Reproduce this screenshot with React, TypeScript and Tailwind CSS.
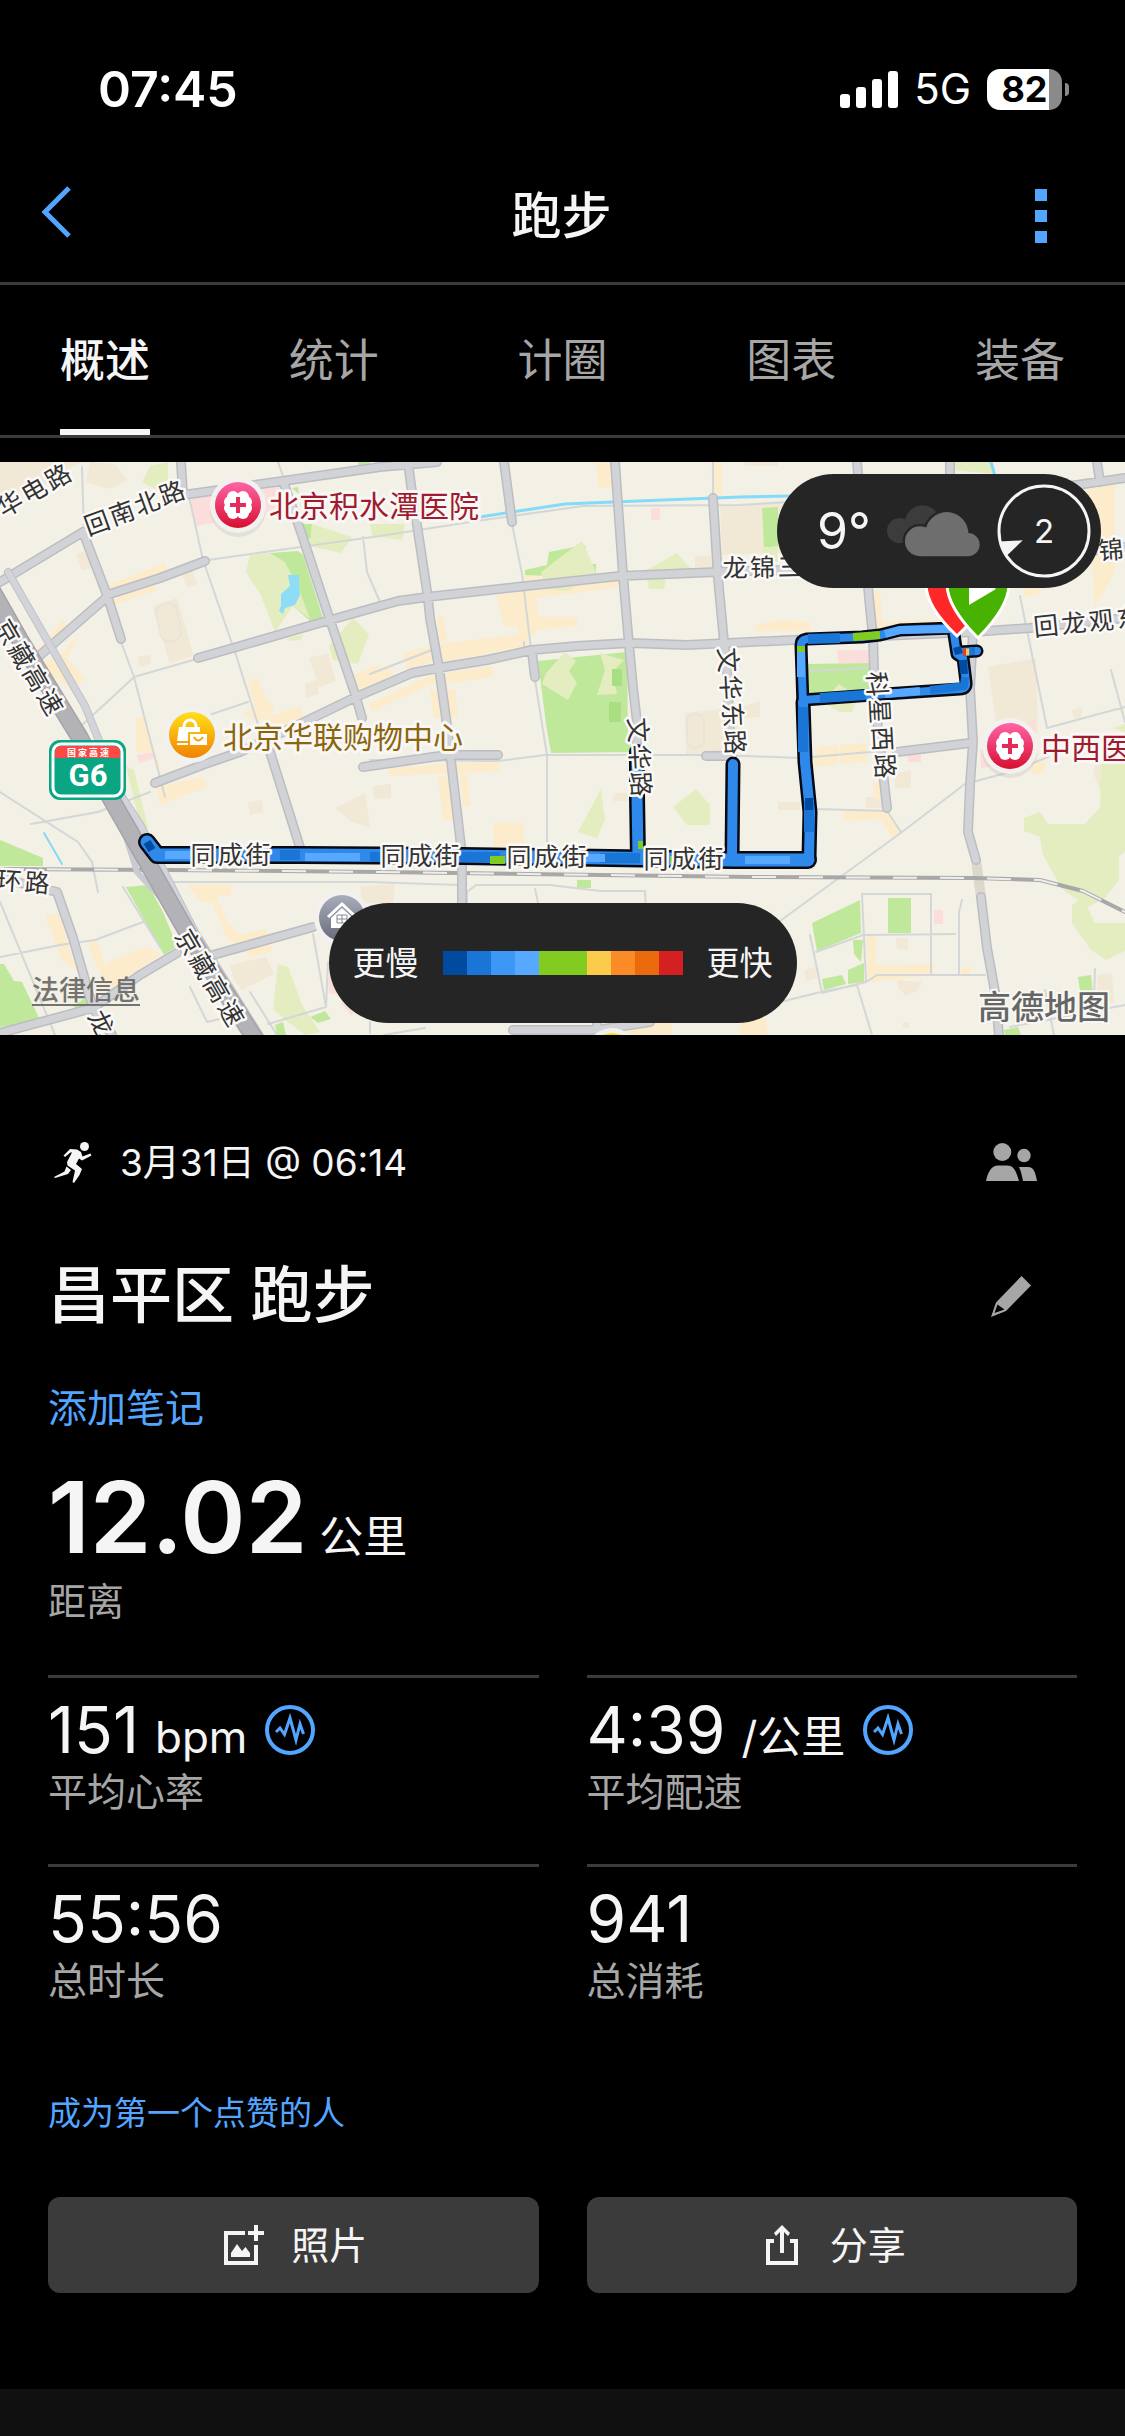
import React from 'react';

const tabs = ['概述', '统计', '计圈', '图表', '装备'];

const paceColors = [
  'bg-[#004a9f]',
  'bg-[#1976d6]',
  'bg-[#3d97f7]',
  'bg-[#56a9ff]',
  'bg-[#82cb20]',
  'bg-[#82cb20]',
  'bg-[#fbcb4b]',
  'bg-[#fa8b27]',
  'bg-[#eb6a0e]',
  'bg-[#d42020]',
];

const stats = [
  { value: '151', unit: 'bpm', label: '平均心率', pulse: true },
  { value: '4:39', unit: '/公里', label: '平均配速', pulse: true },
  { value: '55:56', unit: '', label: '总时长', pulse: false },
  { value: '941', unit: '', label: '总消耗', pulse: false },
];

// Map areas, grouped by fill
const areas = [
  {
    fill: '#f2e8d6',
    d: 'M0 0H83L70 6L40 25L0 33Z M86 20L90 0L115 2L127 18L110 27Z M153 145L177 136L188 173L193 194L170 201L163 180Z M309 196L328 191L336 219L319 225Z M305 222L318 218L318 232L306 236Z M182 112L192 108L197 122L187 126Z M76 92L88 88L92 106L82 108Z M137 195L150 193L151 202L140 205Z M720 44L806 40V90L722 93Z M685 251L740 245V291L686 292Z M695 94L712 94L712 105L695 105Z M248 340L262 338L263 350L250 353Z M335 346L365 331L370 365L352 360Z M373 324L391 322L391 336L374 337Z M613 331H628V339H613Z M988 205L1036 196L1038 270L998 274Z M1072 248L1082 245L1081 258L1074 256Z M895 312L911 308L911 326L895 326Z M778 340H800V348H778Z M866 335H885V346H866Z M360 424L395 422L393 441H362Z M230 503L266 495L274 512L242 528L234 518Z M897 518L922 520L918 528L906 534L898 526Z M896 476L908 476V489L897 487Z M804 508L815 505L817 516L806 519Z M1097 513L1112 511L1114 541L1098 540Z M903 560H909V566H903Z M1095 303L1101 302V330L1093 310Z M745 0H778V4H745Z M742 245L760 239V255L742 256Z',
  },
  {
    fill: '#fceccb',
    d: 'M108 123L165 101L167 108L108 130Z M113 138L155 122L157 128L114 143Z M63 158L68 165L38 195L34 192Z M43 200L60 193L77 174L76 181L66 196L85 216L73 229L45 207Z M248 220L257 215L268 240L273 241L273 250L258 260L243 252L255 246Z M353 213L380 202L380 222L355 230Z M136 255L145 255L150 275L162 310L152 293L136 290Z M262 257L300 244L303 256L268 268Z M596 0H612V26H598Z M711 0H722V32H713Z M496 133L620 119V125L537 136V149L540 155H577V164L537 168L526 180L529 184L440 200L441 182L518 172L518 164L504 165Z M437 154L443 154L447 178L440 180Z M402 192L430 184L433 199L407 207Z M370 211L388 205L394 214L370 225Z M370 241L434 212L436 220L370 250Z M446 211L493 204V215L446 222Z M430 228H440L442 256H434Z M446 228L455 227L458 255H449Z M524 113L539 111L540 117L525 119Z M388 306L500 299V309L389 314Z M438 314L447 314L454 358L443 358Z M460 312L467 312L470 344L463 344Z M493 361H524V385H494Z M157 325L203 315L207 325L160 343Z M188 423L231 422V434H216L227 459L240 473L266 467L268 478L240 483L228 478L212 440H200Z M45 453L60 451L70 490L78 509L62 498Z M87 479L97 476L104 502L145 485L162 492L108 528L96 503Z M245 487L270 482L272 490L248 496Z M873 130L880 129L882 160L990 155L993 163L876 168Z M755 163L780 158L810 160V169H755Z M818 285L838 284V302L812 305Z M840 283L867 281L867 300L840 302Z M873 320L882 320L880 337H874Z M843 348L890 349L901 371L894 378L880 357L843 359Z M1030 302L1045 297L1044 311L1032 313Z M866 472H876V503L933 502V513L868 520Z M740 560L765 553L768 573H740Z M1085 23L1115 22V110L1095 145L1091 80Z M1023 125L1042 127L1040 132L1024 135Z M604 560L672 553V573H604Z M961 506L970 504V512H961Z',
  },
  {
    fill: '#bfe89a',
    d: 'M270 91L298 89L303 93L323 156L310 159L293 144L285 120Z M260 130L273 145L275 168Z M295 62L312 62L311 77L307 76Z M292 26L298 25L299 32Z M358 0H370V3H358Z M549 90L585 83L588 102L596 102V116L525 113L525 108L547 103Z M538 199L627 190L628 272L632 290L551 291L546 262Z M762 46L778 45V85H764Z M808 202L871 201L872 232L809 234Z M577 418H591V426H577Z M0 378L43 396V404H0Z M126 425L148 423L163 450L177 484L164 493Z M0 502L4 502L14 519L22 520L40 558L0 565Z M73 544L85 536L92 545L77 548Z M310 555L325 549L331 557L318 561Z M275 563L283 560L286 573H277Z M812 461L860 438L861 471L817 489Z M888 436H911V471H888Z M853 478L863 478L861 500L854 492Z M848 508L864 501V520L848 522Z M822 517L842 513L846 522L824 528Z M1078 515L1091 513L1093 532L1080 529Z M1004 568L1018 565L1021 573H1005Z',
  },
  {
    fill: '#e4edbf',
    d: 'M142 20L150 4L168 0V22L155 27Z M250 93L270 91L285 100L300 130L310 157L293 144L275 170L262 135L246 110Z M286 177L304 172L300 178L290 179Z M353 156L369 172L358 202L333 198L329 184Z M312 62L352 75L341 91L310 84Z M370 62L405 62L402 78L372 74Z M541 110L582 79L596 110L590 116L568 129L545 127Z M645 109L677 91L690 106L688 108L667 110L664 127L649 127Z M565 190L576 199L569 209L577 221L568 238L542 222L546 211Z M600 191L624 198L612 210L617 232L597 233L605 208Z M601 327L605 358L597 376L578 370Z M696 327L710 343L710 363H687L673 345Z M126 304L134 308L148 365L143 375Z M278 502L288 505L302 543L320 570L305 573L283 556L273 547Z M822 240L839 222L855 233L850 240H856L852 250H840Z M762 86L777 84L778 100H766Z M955 0H992L994 12L955 8Z M1101 302H1125V390L1119 394V418L1105 436L1088 445L1062 427L1043 393L1040 375L1024 369V356L1040 350L1048 362H1085L1100 345Z M1072 443L1083 436L1095 461H1125V489L1106 498L1091 488L1072 461Z M1113 266L1125 262V270Z',
  },
  {
    fill: '#fbdedb',
    d: 'M190 36L281 24V48L196 64Z M651 46H660V58H651Z M837 188L871 188V201L838 201Z M137 293L155 290L155 296L139 301Z M907 292L921 291V300H908Z M1026 260L1035 258V270H1027Z M980 288L990 285V305L981 306Z M934 448H943V462H934Z M328 515L340 510V532H329Z M340 540L356 545L352 554Z',
  },
  {
    fill: '#8ddcf8',
    d: 'M288 113H299V123L300 133L295 143L285 146L283 152L279 149L281 144V132L290 124Z',
  },
  {
    fill: '#a9df82',
    d: 'M612 207H622V224H612Z M609 240H621V260H609Z',
  },
];

const lanes =
  'M82 5L84 70 M188 30L203 98L235 190L262 275 M208 98L380 74L470 60L583 44L740 43L900 33 M121 180L134 215L165 335 M134 215L200 196 M134 215L105 242L82 263 M248 240L206 254 M0 330L78 380L92 400L98 430 M31 362L98 350L150 330 M278 0L285 20 M363 75L367 110L380 140 M512 62L522 112L531 187 M535 218L547 293V400 M370 212L432 188 M370 298L498 299L545 293H720L800 296L870 290L970 278 M166 420H370L460 423 M0 495L60 483L95 478L143 460 M123 425L160 485 M0 440L55 573 M190 525L207 560L228 555 M250 530L277 573 M313 472L326 545L268 562 M326 545L328 500 M467 443V430L476 423L550 423L600 429H645L646 450 M535 427L539 445 M713 0V36 M620 178L524 185V180 M1020 134L1047 266L1125 245 M1111 208L1125 260 M780 459L902 370L965 322L1010 310L1048 295 M815 347L887 349 M887 349L901 370 M862 432H931V513 M862 432L866 520L822 531L810 473 M816 490L863 473L955 472 M866 520L877 513H985 M780 540L825 529L857 523L872 573 M959 513V450L962 438 M1125 543L1010 565 M1045 528L1054 573 M1095 507L1094 535 M370 571V560 M384 573L425 566 M808 209L870 206';

const roads =
  'M0 120L83 70 M181 0L183 33 M183 33L283 19L380 5L437 0 M83 70L107 133L121 177 M107 133L160 116L205 99 M38 195L107 135 M198 196L233 186L330 158L398 139L427 135L517 125L620 114L717 110L850 106L1010 98L1125 85 M283 19L302 73L330 158L356 235L362 256 M155 321L205 302L240 290L300 262L356 235L412 211L438 206L487 198L532 188L577 184L630 181L687 183L750 180L857 175L973 170L1030 166L1125 156 M270 290L293 363L303 395 M363 305L447 293L498 293 M408 0L411 23L428 136L430 156L439 206L446 256L457 350L462 393V440 M504 0L512 60 M532 190L535 215 M615 0L623 113L629 183L633 226L637 260V390 M713 36L718 116L724 180L727 206L731 300 M857 0L862 60L870 146L873 175L875 240L887 346 M706 294H732 M950 0V20 M1097 0L1100 20 M1070 24L1125 16 M897 290L970 281 M973 170L970 226L973 280L970 323L968 370L976 398 M981 435L987 486L995 530L999 573 M57 430L73 476L93 546L112 573 M0 571L93 546L140 513L177 491 M213 493L313 465 M0 416L57 430 M513 568H597L650 560 M597 568V556';

const highway = 'M-10 125L20 178L80 276L110 335L187 470L257 580';
const railway = 'M0 407L167 408L380 410L750 415L973 416L1040 418L1083 429L1125 450';

const routeSegments = [
  { width: 13, d: 'M803 243L801 183Q801 178 807 177L862 175L880 173L900 168L953 166L957 192L963 196L966 220Q967 227 960 227L900 231L803 238' },
  { width: 13, d: 'M960 190L977 189' },
  { width: 15, d: 'M803 240L805 300L810 350L809 396' },
  { width: 18, d: 'M147 380L157 393H300L462 394L610 396L733 398L808 398' },
  { width: 16, d: 'M638 396L637 333V290' },
  { width: 15, d: 'M732 396L733 302' },
];

const routeTints = [
  { color: '#1976d6', width: 10, d: 'M280 393H300 M370 395H380 M460 395H500 M600 396H640 M820 236L865 233 M808 177L840 176 M803 245V290 M809 340V370' },
  { color: '#56a9ff', width: 8, d: 'M165 393H190 M305 395H360 M580 396H605 M745 398H790 M885 172L900 168L950 167 M801 190V215 M885 232L920 229' },
  { color: '#004a9f', width: 8, d: 'M147 380L152 388 M957 185L959 192 M963 198L964 212 M809 336V348' },
  { color: '#1976d6', width: 8, d: 'M965 215L964 224L930 228 M975 189L970 189' },
  { color: '#82cb20', width: 8, d: 'M853 175L880 173 M801 184V190 M490 398H505 M670 398H676 M638 383H643' },
  { color: '#fbcb4b', width: 7, d: 'M966 190L969 190' },
  { color: '#eb3a1e', width: 7, d: 'M963 190L966 190' },
];

// Street names run along a line between the centres of their first and last glyph
const streetLabels = [
  { text: '华电路', from: [10, 42], to: [58, 15], angle: -30 },
  { text: '回南北路', from: [97, 61], to: [172, 31], angle: -20 },
  { text: '京藏高速', from: [7, 170], to: [50, 240], angle: 60 },
  { text: '京藏高速', from: [188, 480], to: [231, 551], angle: 60 },
  { text: '环路', from: [9, 419], to: [37, 421], angle: 4 },
  { text: '龙', from: [101, 561], to: [101, 561], angle: 62 },
  { text: '同成街', from: [203, 393], to: [258, 393], angle: 0 },
  { text: '同成街', from: [393, 394], to: [447, 394], angle: 0 },
  { text: '同成街', from: [519, 395], to: [574, 395], angle: 0 },
  { text: '同成街', from: [656, 397], to: [711, 397], angle: 0 },
  { text: '文华路', from: [638, 268], to: [641, 322], angle: 87 },
  { text: '文华东路', from: [728, 198], to: [735, 280], angle: 87 },
  { text: '科星西路', from: [877, 222], to: [885, 304], angle: 87 },
  { text: '龙锦三', from: [735, 106], to: [790, 105], angle: -1 },
  { text: '锦', from: [1111, 88], to: [1111, 88], angle: -5 },
  { text: '回龙观东', from: [1046, 164], to: [1129, 156], angle: -6 },
];

const StreetLabel: React.FC<{ label: (typeof streetLabels)[number] }> = ({ label }) => {
  const chars = label.text.split('');
  const steps = Math.max(chars.length - 1, 1);
  return (
    <>
      {chars.map((char, i) => {
        const x = label.from[0] + ((label.to[0] - label.from[0]) * i) / steps;
        const y = label.from[1] + ((label.to[1] - label.from[1]) * i) / steps;
        return (
          <text key={i} x={x} y={y + 9} transform={`rotate(${label.angle} ${x} ${y})`} textAnchor="middle">
            {char}
          </text>
        );
      })}
    </>
  );
};

const HospitalPin = ({ x, y }: { x: number; y: number }) => (
  <g transform={`translate(${x} ${y})`}>
    <circle r="28" fill="#9a9a9a" opacity="0.18" cy="4" />
    <circle r="28" fill="#f3f1ef" />
    <circle r="23" fill="url(#hospital)" />
    <g fill="#fff">
      <circle cx="-5" cy="-8" r="6" />
      <circle cx="5" cy="-8" r="6" />
      <circle cx="-5" cy="8" r="6" />
      <circle cx="5" cy="8" r="6" />
      <circle cx="-8" cy="-3" r="6" />
      <circle cx="8" cy="-3" r="6" />
      <circle cx="-8" cy="3" r="6" />
      <circle cx="8" cy="3" r="6" />
    </g>
    <path d="M-2 -8H2V-2H8V2H2V8H-2V2H-8V-2H-2Z" fill="#e52b5c" />
  </g>
);

const CityMap = () => (
  <svg
    className="block h-[573px] w-full"
    viewBox="0 0 1125 573"
    preserveAspectRatio="xMidYMid slice"
    role="img"
    aria-label="跑步路线"
  >
    <defs>
      <linearGradient id="hospital" x1="0" y1="0" x2="0" y2="1">
        <stop offset="0" stopColor="#ff64a6" />
        <stop offset="1" stopColor="#d70f31" />
      </linearGradient>
      <linearGradient id="shop" x1="0" y1="0" x2="0" y2="1">
        <stop offset="0" stopColor="#ffdf1b" />
        <stop offset="1" stopColor="#ef8300" />
      </linearGradient>
      <linearGradient id="home" x1="0" y1="0" x2="0" y2="1">
        <stop offset="0" stopColor="#a9adbb" />
        <stop offset="1" stopColor="#676b7b" />
      </linearGradient>
    </defs>

    <rect width="1125" height="573" fill="#f3f0e5" />
    {areas.map((area) => (
      <path key={area.fill} d={area.d} fill={area.fill} />
    ))}
    <g fill="none" stroke="#e3e4dc" strokeOpacity="0.7" strokeWidth="2">
      <rect x="158" y="141" width="21" height="39" rx="10" transform="rotate(-12 168 160)" />
      <rect x="687" y="252" width="17" height="34" rx="8" />
    </g>

    <g fill="none" strokeLinecap="round" strokeLinejoin="round">
      <path d={lanes} stroke="#d3d7d7" strokeWidth="2" />
      <path d="M480 55L512 50L565 42L613 40L740 35L900 32 M991 0L995 14" stroke="#84daf9" strokeWidth="3" />
      <path d="M44 371L62 402" stroke="#84daf9" strokeWidth="2" />
      <path d="M976 398L981 435" stroke="#dcd8cc" strokeWidth="10" strokeLinecap="butt" />
      <path d={railway} stroke="#a8a8a8" strokeWidth="4" />
      <path d={railway} stroke="#eeeeee" strokeWidth="2" strokeDasharray="24 23" strokeLinecap="butt" />
      <path d={roads} stroke="#bcbdc2" strokeWidth="10" />
      <path d={roads} stroke="#d2d3d7" strokeWidth="7" />
      <path d="M8 110L85 244L122 335L140 362L195 470L270 590" stroke="#c0c2c8" strokeWidth="8" />
      <path d="M8 110L85 244L122 335L140 362L195 470L270 590" stroke="#d2d4d9" strokeWidth="6" />
      <path d="M100 320L126 375L137 410L160 435" stroke="#c9cbd0" strokeWidth="6" />
      <path d={highway} stroke="#a3a3a9" strokeWidth="18" />
      <path d={highway} stroke="#b2b2b7" strokeWidth="15" />
    </g>

    <g fill="none" strokeLinecap="round" strokeLinejoin="round">
      {routeSegments.map((segment) => (
        <path key={segment.d} d={segment.d} stroke="#050a14" strokeWidth={segment.width} />
      ))}
      {routeSegments.map((segment) => (
        <path key={segment.d} d={segment.d} stroke="#2f89ea" strokeWidth={segment.width - 5} />
      ))}
      {routeTints.map((tint) => (
        <path key={tint.d} d={tint.d} stroke={tint.color} strokeWidth={tint.width} strokeLinecap="butt" />
      ))}
    </g>

    <g
      className="font-['Noto_Sans_CJK_SC',sans-serif] text-[25px]"
      fill="#333"
      stroke="#fbfaf8"
      strokeWidth="5"
      strokeLinejoin="round"
      paintOrder="stroke"
    >
      {streetLabels.map((label, i) => (
        <StreetLabel key={i} label={label} />
      ))}
    </g>

    {/* start and finish markers */}
    <g stroke="#fff" strokeWidth="3">
      <path d="M957 174C940 158 926 140 926 122A31 31 0 0 1 988 122C988 140 974 158 957 174Z" fill="#ff2828" />
      <path d="M978 176C960 158 947 140 947 122A31 31 0 0 1 1009 122C1009 140 996 158 978 176Z" fill="#47b300" />
    </g>
    <path d="M969 110L996 127L969 143Z" fill="#fff" />

    <g
      className="font-['Noto_Sans_CJK_SC',sans-serif] text-[30px]"
      stroke="#f9f7f5"
      strokeWidth="6"
      strokeLinejoin="round"
      paintOrder="stroke"
    >
      <text x="269" y="55" fill="#a01b2e">北京积水潭医院</text>
      <text x="223" y="286" fill="#8a650d">北京华联购物中心</text>
      <text x="1041" y="297" fill="#a01b2e">中西医院</text>
    </g>
    <HospitalPin x={238} y={43} />
    <HospitalPin x={1010} y={284} />
    <circle cx="192" cy="273" r="28" fill="#f3f1ef" />
    <circle cx="192" cy="273" r="23" fill="url(#shop)" />
    <path d="M184 267V264A6 6 0 0 1 196 264V267" fill="none" stroke="#fff" strokeWidth="3" />
    <path d="M179 265H200V270H188V279H177Z M177 281H188V283H177Z M190 272H207V283H190Z" fill="#fff" />
    <path d="M194 275Q198 282 203 275" fill="none" stroke="#f5a70a" strokeWidth="2" />
    <circle cx="342" cy="456" r="28" fill="#f3f1ef" />
    <circle cx="342" cy="456" r="23" fill="url(#home)" />
    <path d="M328 455L342 442L356 455" fill="none" stroke="#fff" strokeWidth="3" />
    <path d="M331 456L342 446L353 456V466H331Z" fill="#fff" />
    <path d="M337 453H347V461H337Z M342 453V461M337 457H347" fill="none" stroke="#858999" strokeWidth="1" />
    <circle cx="612" cy="592" r="26" fill="#f3f1ef" />
    <circle cx="612" cy="592" r="21" fill="url(#shop)" />

    {/* G6 expressway shield */}
    <rect x="49" y="278" width="77" height="60" rx="11" fill="#0aa583" />
    <rect x="53" y="282" width="69" height="52" rx="8" fill="none" stroke="#fff" strokeWidth="3" />
    <path d="M55 296V290Q55 284 61 284H114Q120 284 120 290V296Z" fill="#fb4a45" />
    <text x="88" y="294" textAnchor="middle" fill="#fff" className="font-['Noto_Sans_CJK_SC',sans-serif] text-[9px] font-bold">
      国 家 高 速
    </text>
    <text x="88" y="324" textAnchor="middle" fill="#fff" className="font-['Roboto',sans-serif] text-[31px] font-bold">
      G6
    </text>

    <text
      x="978"
      y="557"
      fill="#666"
      stroke="#f8f7f2"
      strokeWidth="4"
      paintOrder="stroke"
      className="font-['Noto_Sans_CJK_SC',sans-serif] text-[33px] font-medium"
    >
      高德地图
    </text>
  </svg>
);

const CloudIcon = () => (
  <svg className="h-[52px] w-[93px]" viewBox="440 150 280 156" aria-hidden="true">
    <g fill="#3c3c3c">
      <circle cx="478" cy="227" r="38" />
      <circle cx="547" cy="205" r="54" />
    </g>
    <g fill="#252525" stroke="#252525" strokeWidth="14">
      <circle cx="539" cy="259" r="45" />
      <circle cx="620" cy="236" r="65" />
    </g>
    <g fill="#6e6e6e">
      <circle cx="539" cy="259" r="45" />
      <circle cx="620" cy="236" r="65" />
      <circle cx="684" cy="269" r="35" />
      <path d="M539 250H684V304H539Z" />
    </g>
  </svg>
);

const PulseIcon = () => (
  <svg className="h-[50px] w-[50px]" viewBox="0 0 50 50" fill="none" stroke="#52a6ff" aria-hidden="true">
    <circle cx="25" cy="25" r="23" strokeWidth="4" />
    <path d="M11 27L15 23L19.500 29.500L25 13L31 35L35 19L38.500 29" strokeWidth="3" />
  </svg>
);

const RunnerIcon = () => (
  <svg className="h-[41px] w-[38px]" viewBox="0 0 38 41" fill="#f5f5f5" aria-hidden="true">
    <circle cx="30.500" cy="4.500" r="4.500" />
    <path d="M16 7L23 7.500L27 10L28.500 14.500L36.500 11.500L37.500 13.500L28 18.500L25 16.500L22 22L28 27L25.500 33L20 41L18.500 40L20.500 31L21 28.500L13.500 23.500L13 20L18 10.500H16.500L11 15L9.500 13.500Z" />
    <path d="M12.500 24.500L17 28L14 32L1 36L0 35L10.500 29.500Z" />
  </svg>
);

const PeopleIcon = () => (
  <svg className="h-[38px] w-[51px]" viewBox="0 0 51 38" fill="#a6a6a6" aria-hidden="true">
    <circle cx="16.300" cy="9" r="9" />
    <path d="M0 38C2 28 6 22.500 12 22.500H21C28 22.500 30 28 33 38Z" />
    <circle cx="38" cy="12.500" r="6.700" />
    <path d="M33 24H42C48 24 49.500 30 51 38H37C36 33 35 28 33 24Z" />
  </svg>
);

const PencilIcon = () => (
  <svg className="h-[41px] w-[40px]" viewBox="0 0 40 41" fill="#a6a6a6" fillRule="evenodd" aria-hidden="true">
    <path d="M30.600 0L40 9.500L15 35L0 41L5 26.500Z M6.500 28.500L3.500 37L13.500 33.500Z" />
  </svg>
);

const PhotoIcon = () => (
  <svg className="h-10 w-12" viewBox="-5 0 48 40" fill="#f5f5f5" aria-hidden="true">
    <path d="M0 6H21V10H4V36H30V20H34V40H0Z M30 0H34V6H40V10H34V16H30V10H24V6H30Z M7 32V28L13 19L18 26L21.500 22L26 28V32Z" />
  </svg>
);

const ShareIcon = () => (
  <svg className="h-10 w-12" viewBox="-8 0 48 40" fill="#f5f5f5" aria-hidden="true">
    <path d="M0 14H8V18H4V36H28V18H24V14H32V40H0Z" />
    <path d="M16 0L24 8L22 11L18 7V28H14V7L10 11L8 8Z" />
  </svg>
);

const StatusBar = () => (
  <div className="flex h-[150px] items-center justify-between pt-7 pr-14 pl-[98px] text-white">
    <span className="text-[50px] leading-none font-semibold">07:45</span>
    <div className="flex items-center gap-4">
      <div className="flex items-end gap-[6px]">
        <span className="h-[14px] w-[10px] rounded-[3px] bg-white" />
        <span className="h-[21px] w-[10px] rounded-[3px] bg-white" />
        <span className="h-[29px] w-[10px] rounded-[3px] bg-white" />
        <span className="h-[37px] w-[10px] rounded-[3px] bg-white" />
      </div>
      <span className="text-[42px] leading-none">5G</span>
      <div className="flex items-center gap-[3px]">
        <div className="flex h-[41px] w-[75px] items-center justify-center rounded-[13px] bg-linear-to-r from-white from-83% to-[#8a8a8a] to-83% text-[36px] leading-none font-bold text-black">
          82
        </div>
        <span className="h-[13px] w-[4px] rounded-r-full bg-[#8a8a8a]" />
      </div>
    </div>
  </div>
);

export default function App() {
  return (
    <div className="min-h-screen bg-black font-['Inter','Noto_Sans_CJK_SC',sans-serif] text-[#f5f5f5]">
      <StatusBar />

      <header className="flex h-[135px] items-center justify-between border-b-[3px] border-[#3b3b3b] pr-[78px] pl-10">
        <button aria-label="返回" className="pb-2">
          <svg className="h-[52px] w-8" viewBox="0 0 32 52" fill="none" stroke="#52a6ff" strokeWidth="5" aria-hidden="true">
            <path d="M29 2L5 26L29 50" />
          </svg>
        </button>
        <h1 className="pl-9 text-[50px] leading-none font-medium">跑步</h1>
        <button aria-label="更多" className="flex w-8 flex-col items-end gap-[9px]">
          <span className="size-3 bg-[#52a6ff]" />
          <span className="size-3 bg-[#52a6ff]" />
          <span className="size-3 bg-[#52a6ff]" />
        </button>
      </header>

      <nav role="tablist" className="flex justify-between border-b-[3px] border-[#3b3b3b] px-[60px]">
        {tabs.map((tab, i) => (
          <button
            key={tab}
            role="tab"
            aria-selected={i === 0}
            className="h-[150px] border-y-[6px] border-transparent text-[45px] leading-none text-[#a6a6a6] aria-selected:border-b-[#f5f5f5] aria-selected:font-medium aria-selected:text-[#f5f5f5]"
          >
            {tab}
          </button>
        ))}
      </nav>

      <section className="relative mt-6 overflow-hidden">
        <CityMap />
        <div className="absolute top-3 right-6 flex h-[114px] w-[324px] items-center justify-between rounded-full bg-[#252525] pr-[10px] pl-10">
          <span className="text-[50px] leading-none">9°</span>
          <CloudIcon />
          <div className="relative flex size-[94px] items-center justify-center text-[33px] leading-none">
            <svg className="absolute inset-0" viewBox="770 86 284 284" aria-hidden="true">
              <circle cx="912" cy="228" r="136" fill="none" stroke="#f5f5f5" strokeWidth="9" />
              <path d="M778 260L848 256L800 302Z" fill="#f5f5f5" />
            </svg>
            2
          </div>
        </div>
        <div className="absolute bottom-3 left-1/2 flex h-[120px] -translate-x-1/2 items-center gap-6 rounded-full bg-[#252525] px-6 text-[33px] leading-none whitespace-nowrap">
          <span>更慢</span>
          <div className="flex">
            {paceColors.map((color, i) => (
              <span key={i} className={`size-6 ${color}`} />
            ))}
          </div>
          <span>更快</span>
        </div>
        <a href="#legal" className="absolute bottom-6 left-8 text-[27px] leading-10 font-medium text-[#75736f] underline decoration-2 underline-offset-4">
          法律信息
        </a>
      </section>

      <main className="px-12 pt-[103px]">
        <div className="flex h-12 items-center justify-between pr-10 pl-[6px]">
          <div className="flex items-center gap-7">
            <RunnerIcon />
            <span className="text-[37px] leading-none">3月31日 @ 06:14</span>
          </div>
          <button aria-label="隐私设置">
            <PeopleIcon />
          </button>
        </div>

        <div className="mt-[74px] flex h-[72px] items-center justify-between pr-[46px]">
          <h2 className="text-[62px] leading-[72px] font-medium">昌平区 跑步</h2>
          <button aria-label="编辑名称">
            <PencilIcon />
          </button>
        </div>

        <button className="mt-[52px] block text-[39px] leading-[48px] text-[#52a6ff]">添加笔记</button>

        <div className="mt-[34px] flex items-baseline gap-3">
          <span className="text-[99px] leading-[102px] font-semibold">12.02</span>
          <span className="text-[44px] leading-none">公里</span>
        </div>
        <div className="mt-[9px] text-[38px] leading-[48px] text-[#a6a6a6]">距离</div>

        <div className="mt-[50px] grid grid-cols-2 gap-x-12">
          {stats.map((stat) => (
            <div key={stat.label} className="h-[189px] border-t-[3px] border-[#3b3b3b] pt-4">
              <div className="flex h-[72px] items-center gap-[18px]">
                <div className="flex items-baseline gap-4">
                  <span className="text-[64px] leading-[72px]">{stat.value}</span>
                  {stat.unit && <span className="text-[44px] leading-none">{stat.unit}</span>}
                </div>
                {stat.pulse && (
                  <button aria-label={`${stat.label}图表`}>
                    <PulseIcon />
                  </button>
                )}
              </div>
              <div className="mt-[2px] text-[39px] leading-[48px] text-[#a6a6a6]">{stat.label}</div>
            </div>
          ))}
        </div>

        <button className="mt-9 block text-[33px] leading-[48px] text-[#52a6ff]">成为第一个点赞的人</button>

        <div className="mt-[60px] grid grid-cols-2 gap-x-12">
          <button className="flex h-24 items-center justify-center gap-6 rounded-xl bg-[#3b3b3b] text-[38px] leading-none">
            <PhotoIcon />
            照片
          </button>
          <button className="flex h-24 items-center justify-center gap-6 rounded-xl bg-[#3b3b3b] text-[38px] leading-none">
            <ShareIcon />
            分享
          </button>
        </div>
      </main>

      <footer className="mt-24 h-[47px] bg-[#101010]" />
    </div>
  );
}
